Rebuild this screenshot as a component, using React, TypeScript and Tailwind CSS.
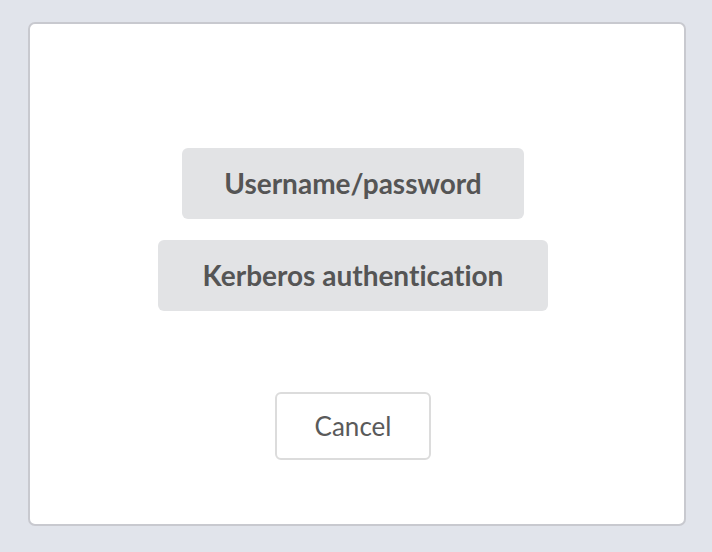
export default function App() {
  return (
    <div className="w-[712px] h-[552px] bg-[#e1e4eb] pt-[22px] pl-[28px] [font-variant-ligatures:none]" style={{ fontFamily: "Lato, 'Noto Sans', sans-serif" }}>
      <div className="w-[658px] h-[504px] bg-white border-2 border-[#c8c9cf] rounded-[7px] flex flex-col items-center pt-[124px] pr-[8px]">
        <button className="h-[71px] px-[42px] pb-[1px] rounded-[6px] bg-[#e2e3e5] text-[#555555] text-[28px] font-bold leading-none">
          Username/password
        </button>
        <button className="mt-[21px] h-[71px] px-[45px] pb-[1px] rounded-[6px] bg-[#e2e3e5] text-[#555555] text-[28px] font-bold leading-none">
          Kerberos authentication
        </button>
        <button className="mt-[81px] h-[68px] px-[38px] rounded-[6px] bg-white border-2 border-[#dcdcdc] text-[#5a5a5a] text-[26px] leading-none">
          Cancel
        </button>
      </div>
    </div>
  );
}
